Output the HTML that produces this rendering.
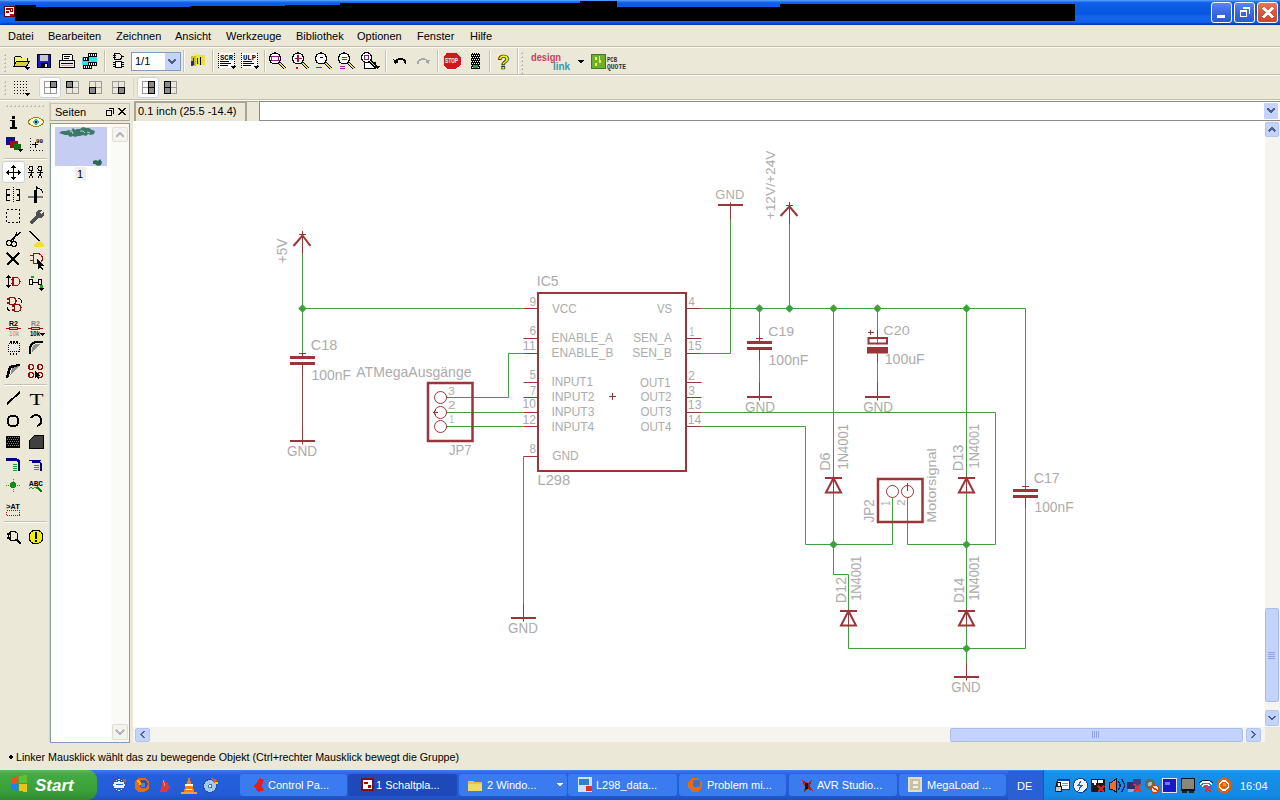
<!DOCTYPE html>
<html><head><meta charset="utf-8">
<style>

*{margin:0;padding:0;box-sizing:border-box}
html,body{width:1280px;height:800px;overflow:hidden;background:#ebe8d7;font-family:"Liberation Sans",sans-serif;font-size:11px;color:#000}
.abs{position:absolute}
.t{position:absolute;white-space:nowrap;line-height:1}

</style></head>
<body>
<div class="abs" style="left:0;top:0;width:1280px;height:25px;background:linear-gradient(#60a8ff 0px,#2a78f8 1.5px,#0c5ee8 3px,#0856e0 14px,#1464ec 16px,#1262ea 22px,#0a48c8 23.5px,#0038a8 25px)"></div><div class="abs" style="left:15px;top:6.5px;width:175px;height:14.2px;background:#000"></div><div class="abs" style="left:15px;top:5px;width:21px;height:15.7px;background:#000"></div><div class="abs" style="left:190px;top:5.5px;width:95px;height:15.2px;background:#000"></div><div class="abs" style="left:285px;top:4.7px;width:55px;height:16.0px;background:#000"></div><div class="abs" style="left:340px;top:3.3px;width:240px;height:17.4px;background:#000"></div><div class="abs" style="left:580px;top:0.5px;width:37px;height:20.2px;background:#000"></div><div class="abs" style="left:617px;top:7px;width:163px;height:13.7px;background:#000"></div><div class="abs" style="left:780px;top:4px;width:295px;height:16.7px;background:#000"></div><div class="abs" style="left:4px;top:6px;width:11px;height:11px;background:#fff;border:1px solid #600"></div><div class="abs" style="left:6px;top:8px;width:4px;height:2px;background:#900"></div><div class="abs" style="left:6px;top:11px;width:3px;height:2px;background:#900"></div><div class="abs" style="left:10px;top:8px;width:3px;height:4px;border:1px solid #900"></div><div class="abs" style="left:10px;top:14px;width:4px;height:2px;background:#c00"></div><div class="abs" style="left:1211px;top:2px;width:21px;height:21px;border:1px solid #fff;border-radius:3px;background:linear-gradient(#5a86f0,#3a68e0 50%,#2e58d0)"></div><div class="abs" style="left:1234px;top:2px;width:21px;height:21px;border:1px solid #fff;border-radius:3px;background:linear-gradient(#5a86f0,#3a68e0 50%,#2e58d0)"></div><div class="abs" style="left:1257px;top:2px;width:21px;height:21px;border:1px solid #fff;border-radius:3px;background:linear-gradient(#e87858,#d85a38 50%,#c84a28)"></div><div class="abs" style="left:1217px;top:15px;width:8px;height:3px;background:#fff"></div><div class="abs" style="left:1240px;top:10px;width:7px;height:7px;border:1px solid #fff;border-top-width:2px"></div><div class="abs" style="left:1243px;top:7px;width:7px;height:7px;border:1px solid #fff;border-top-width:2px;border-left:none;border-bottom:none"></div><div class="abs" style="left:0;top:46px;width:1280px;height:1px;background:#c2bfae"></div><div class="abs" style="left:0;top:47px;width:1280px;height:1px;background:#fbfaf4"></div><div class="t" style="left:8px;top:31px">Datei</div><div class="t" style="left:48px;top:31px">Bearbeiten</div><div class="t" style="left:116px;top:31px">Zeichnen</div><div class="t" style="left:175px;top:31px">Ansicht</div><div class="t" style="left:226px;top:31px">Werkzeuge</div><div class="t" style="left:296px;top:31px">Bibliothek</div><div class="t" style="left:357px;top:31px">Optionen</div><div class="t" style="left:417px;top:31px">Fenster</div><div class="t" style="left:470px;top:31px">Hilfe</div><div class="abs" style="left:0;top:74px;width:1280px;height:1px;background:#c2bfae"></div><div class="abs" style="left:0;top:75px;width:1280px;height:1px;background:#fbfaf4"></div><div class="abs" style="left:0;top:99px;width:1280px;height:1px;background:#c2bfae"></div><div class="abs" style="left:0;top:100px;width:1280px;height:1px;background:#fbfaf4"></div><div class="abs" style="left:131px;top:52px;width:50px;height:19px;background:#fff;border:1px solid #7f9db9"></div><div class="abs" style="left:165px;top:53px;width:15px;height:17px;background:#c3d3fd;border-radius:1px"></div><div class="t" style="left:135px;top:56px">1/1</div><div class="abs" style="left:39px;top:77px;width:22px;height:21px;background:#fcfcf9;border:1px solid #c9d2dc;border-radius:3px"></div><div class="abs" style="left:137px;top:77px;width:22px;height:21px;background:#fcfcf9;border:1px solid #c9d2dc;border-radius:3px"></div><div class="abs" style="left:2px;top:161px;width:23px;height:22px;background:#fcfcf9;border:1px solid #c9d2dc;border-radius:3px"></div><div class="abs" style="left:49px;top:101px;width:1px;height:641px;background:#d8d4c0"></div><div class="abs" style="left:50px;top:103px;width:80px;height:18px;border:1px solid #c5c1ae;border-bottom-color:#a7a491"></div><div class="t" style="left:55px;top:107px">Seiten</div><div class="abs" style="left:50px;top:123px;width:80px;height:620px;background:#fff;border:1px solid #7f9db9"></div><div class="abs" style="left:111px;top:124px;width:18px;height:618px;background:#fafaf7"></div><div class="abs" style="left:112px;top:127px;width:16px;height:15px;background:#f4f3ee;border:1px solid #e0ded4;border-radius:2px"></div><div class="abs" style="left:112px;top:724px;width:16px;height:16px;background:#f4f3ee;border:1px solid #e0ded4;border-radius:2px"></div><div class="abs" style="left:55px;top:127px;width:52px;height:39px;background:#c6cdf2"></div><div class="abs" style="left:75px;top:167px;width:11px;height:13px;background:#f0efe8"></div><div class="t" style="left:77px;top:169px">1</div><div class="abs" style="left:134px;top:101px;width:112px;height:20px;border-top:2px solid #a8a592;border-left:2px solid #a8a592"></div><div class="t" style="left:138px;top:106px">0.1 inch (25.5 -14.4)</div><div class="abs" style="left:245px;top:101px;width:13px;height:20px;border-left:2px solid #a8a592;border-top:1px solid #a8a592"></div><div class="abs" style="left:259px;top:101px;width:1021px;height:20px;background:#fff;border:1px solid #8c8c8c;border-right:none"></div><div class="abs" style="left:1264px;top:103px;width:14px;height:16px;background:#c3d3fd;border-radius:1px"></div><div class="abs" style="left:133px;top:121px;width:1132px;height:606px;background:#fff"></div><div class="abs" style="left:1265px;top:121px;width:15px;height:606px;background:#f5f4ee"></div><div class="abs" style="left:1265px;top:122px;width:14px;height:15px;background:#c3d3fd;border:1px solid #b2c4f0;border-radius:2px"></div><div class="abs" style="left:1265px;top:608px;width:14px;height:94px;background:#c3d3fd;border:1px solid #a9bdec;border-radius:2px"></div><div class="abs" style="left:1265px;top:710px;width:14px;height:16px;background:#c3d3fd;border:1px solid #b2c4f0;border-radius:2px"></div><div class="abs" style="left:133px;top:727px;width:1132px;height:15px;background:#f5f4ee"></div><div class="abs" style="left:135px;top:728px;width:15px;height:14px;background:#c3d3fd;border:1px solid #b2c4f0;border-radius:2px"></div><div class="abs" style="left:950px;top:728px;width:293px;height:14px;background:#c3d3fd;border:1px solid #a9bdec;border-radius:2px"></div><div class="abs" style="left:1246px;top:728px;width:15px;height:14px;background:#c3d3fd;border:1px solid #b2c4f0;border-radius:2px"></div><div class="t" style="left:16px;top:752px;transform:scaleX(0.972);transform-origin:0 0">Linker Mausklick wählt das zu bewegende Objekt (Ctrl+rechter Mausklick bewegt die Gruppe)</div><div class="abs" style="left:0;top:770px;width:1280px;height:30px;background:linear-gradient(#3d7ff0 0px,#2f6fe8 2px,#2460dc 5px,#245cd8 24px,#1e50c0 30px)"></div><div class="abs" style="left:0;top:770px;width:97px;height:30px;border-radius:0 9px 9px 0;background:linear-gradient(#5cbc5c 0px,#44aa44 4px,#3aa23a 20px,#2e8a2e 30px)"></div><div class="t" style="left:35px;top:777px;color:#fff;font-size:17px;font-weight:bold;font-style:italic">Start</div><div class="abs" style="left:240px;top:774px;width:107px;height:22px;border-radius:3px;background:#3a7bf0"></div><div class="t" style="left:268px;top:780px;color:#fff;font-size:11px">Control Pa...</div><div class="abs" style="left:348px;top:774px;width:109px;height:22px;border-radius:3px;background:#1d4ab8"></div><div class="t" style="left:376px;top:780px;color:#fff;font-size:11px">1 Schaltpla...</div><div class="abs" style="left:459px;top:774px;width:108px;height:22px;border-radius:3px;background:#3a7bf0"></div><div class="t" style="left:487px;top:780px;color:#fff;font-size:11px">2 Windo...</div><div class="abs" style="left:568px;top:774px;width:109px;height:22px;border-radius:3px;background:#3a7bf0"></div><div class="t" style="left:596px;top:780px;color:#fff;font-size:11px">L298_data...</div><div class="abs" style="left:679px;top:774px;width:107px;height:22px;border-radius:3px;background:#3a7bf0"></div><div class="t" style="left:707px;top:780px;color:#fff;font-size:11px">Problem mi...</div><div class="abs" style="left:789px;top:774px;width:108px;height:22px;border-radius:3px;background:#3a7bf0"></div><div class="t" style="left:817px;top:780px;color:#fff;font-size:11px">AVR Studio...</div><div class="abs" style="left:899px;top:774px;width:107px;height:22px;border-radius:3px;background:#3a7bf0"></div><div class="t" style="left:927px;top:780px;color:#fff;font-size:11px">MegaLoad ...</div><div class="abs" style="left:1008px;top:771px;width:35px;height:29px;background:#2a5fd6"></div><div class="t" style="left:1017px;top:781px;color:#fff">DE</div><div class="abs" style="left:1043px;top:770px;width:237px;height:30px;background:linear-gradient(#2a9cf0 0px,#1690e8 3px,#138ae6 25px,#1080d8 30px);border-left:1px solid #0a5ab8"></div><div class="t" style="left:1240px;top:781px;color:#fff">16:04</div>
<svg class="abs" style="left:0;top:0" width="1280" height="800"><g shape-rendering="crispEdges"><path d="M1263 7.5l10 10M1273 7.5l-10 10" fill="none" stroke="#fff" stroke-width="2.2"/><rect x="4" y="54" width="2" height="2" fill="#c0bcaa"/><rect x="4" y="54" width="1" height="1" fill="#f8f8f0"/><rect x="4" y="58" width="2" height="2" fill="#c0bcaa"/><rect x="4" y="58" width="1" height="1" fill="#f8f8f0"/><rect x="4" y="62" width="2" height="2" fill="#c0bcaa"/><rect x="4" y="62" width="1" height="1" fill="#f8f8f0"/><rect x="4" y="66" width="2" height="2" fill="#c0bcaa"/><rect x="4" y="66" width="1" height="1" fill="#f8f8f0"/><rect x="4" y="70" width="2" height="2" fill="#c0bcaa"/><rect x="4" y="70" width="1" height="1" fill="#f8f8f0"/><path d="M14.5 56.5h6l1 1.5h6v3" fill="none" stroke="#000" stroke-width="1"/><rect x="14" y="57" width="1" height="10" fill="#000"/><rect x="15" y="58" width="12" height="3" fill="#f4f080"/><path d="M14 66.5h12.5l3-5.5h-13z" fill="#d8d040" stroke="#000" stroke-width="1"/><path d="M25 67h5l-2.5 3z" fill="#000" stroke="none" stroke-width="1"/><rect x="37" y="54" width="14" height="14" fill="#000"/><rect x="38" y="55" width="12" height="12" fill="#1c1cb8"/><rect x="40" y="55" width="8" height="6" fill="#c8c8c8"/><rect x="41" y="63" width="7" height="5" fill="#000"/><rect x="45" y="64" width="2" height="3" fill="#e0e0e0"/><path d="M62.5 54.5h9l1.5 1.5-1 4h-10z" fill="#fff" stroke="#000" stroke-width="1"/><rect x="64" y="56" width="6" height="1" fill="#000"/><rect x="64" y="58" width="5" height="1" fill="#000"/><path d="M59.5 60.5h15v7h-15z" fill="#e8e8e8" stroke="#000" stroke-width="1"/><rect x="61" y="63" width="12" height="1" fill="#000"/><rect x="61" y="65" width="12" height="1" fill="#d8c040"/><rect x="82" y="57" width="15" height="8" fill="#30e0e8"/><rect x="88" y="53" width="9" height="4" fill="#000"/><rect x="89" y="54" width="1" height="2" fill="#fff"/><rect x="91" y="54" width="1" height="2" fill="#fff"/><rect x="93" y="54" width="1" height="2" fill="#fff"/><rect x="95" y="54" width="1" height="2" fill="#fff"/><rect x="83" y="57" width="6" height="4" fill="#000"/><rect x="84" y="58" width="1" height="2" fill="#fff"/><rect x="86" y="58" width="1" height="2" fill="#fff"/><rect x="88" y="62" width="9" height="4" fill="#000"/><rect x="89" y="63" width="1" height="2" fill="#fff"/><rect x="91" y="63" width="1" height="2" fill="#fff"/><rect x="93" y="63" width="1" height="2" fill="#fff"/><rect x="95" y="63" width="1" height="2" fill="#fff"/><rect x="83" y="65" width="9" height="4" fill="#000"/><rect x="84" y="66" width="1" height="2" fill="#fff"/><rect x="86" y="66" width="1" height="2" fill="#fff"/><rect x="88" y="66" width="1" height="2" fill="#fff"/><rect x="90" y="66" width="1" height="2" fill="#fff"/><rect x="104" y="50" width="1" height="22" fill="#c5c2b2"/><rect x="105" y="50" width="1" height="22" fill="#fcfcf8"/><path d="M113 55.5h3M114.5 53.5h4a3 3 0 0 1 0 6h-4z M121.5 56.5h2 M113 57.5h3" fill="none" stroke="#000" stroke-width="1"/><rect x="115" y="61" width="7" height="7" fill="#000"/><rect x="116" y="62" width="5" height="5" fill="#fff"/><rect x="113" y="62" width="2" height="1" fill="#000"/><rect x="122" y="62" width="2" height="1" fill="#000"/><rect x="113" y="64" width="2" height="1" fill="#000"/><rect x="122" y="64" width="2" height="1" fill="#000"/><rect x="113" y="66" width="2" height="1" fill="#000"/><rect x="122" y="66" width="2" height="1" fill="#000"/><path d="M168.5 59.5l3.5 3.5 3.5-3.5" fill="none" stroke="#4d6185" stroke-width="2"/><rect x="183" y="50" width="1" height="22" fill="#c5c2b2"/><rect x="184" y="50" width="1" height="22" fill="#fcfcf8"/><path d="M191 56l4-3h5l-4 3z" fill="#f0f060" stroke="none" stroke-width="1"/><rect x="191" y="56" width="5" height="10" fill="#c8c020"/><rect x="196" y="55" width="9" height="10" fill="#e8e040"/><rect x="193" y="58" width="1" height="7" fill="#202060"/><rect x="197" y="58" width="1" height="6" fill="#202060"/><rect x="200" y="57" width="1" height="8" fill="#000"/><rect x="191" y="61" width="2" height="5" fill="#303080"/><rect x="212" y="50" width="1" height="22" fill="#c5c2b2"/><rect x="213" y="50" width="1" height="22" fill="#fcfcf8"/><rect x="218" y="53" width="17" height="15" fill="#fff"/><rect x="234" y="53" width="1" height="1" fill="#000"/><rect x="218" y="53" width="1" height="1" fill="#000"/><rect x="234" y="55" width="1" height="1" fill="#000"/><rect x="218" y="55" width="1" height="1" fill="#000"/><rect x="234" y="57" width="1" height="1" fill="#000"/><rect x="218" y="57" width="1" height="1" fill="#000"/><rect x="234" y="59" width="1" height="1" fill="#000"/><rect x="218" y="59" width="1" height="1" fill="#000"/><rect x="234" y="61" width="1" height="1" fill="#000"/><rect x="218" y="61" width="1" height="1" fill="#000"/><rect x="234" y="63" width="1" height="1" fill="#000"/><rect x="218" y="63" width="1" height="1" fill="#000"/><rect x="234" y="65" width="1" height="1" fill="#000"/><rect x="218" y="65" width="1" height="1" fill="#000"/><rect x="234" y="67" width="1" height="1" fill="#000"/><rect x="218" y="67" width="1" height="1" fill="#000"/><text x="220" y="59.5" font-family="Liberation Mono" font-weight="bold" font-size="7.5" fill="#000" textLength="13" lengthAdjust="spacingAndGlyphs">SCR</text><rect x="220" y="61" width="9" height="1" fill="#000"/><rect x="220" y="63" width="11" height="1" fill="#000"/><rect x="220" y="65" width="8" height="1" fill="#000"/><path d="M230 66h6l-3 3z" fill="#000" stroke="none" stroke-width="1"/><rect x="241" y="53" width="17" height="15" fill="#fff"/><rect x="257" y="53" width="1" height="1" fill="#000"/><rect x="241" y="53" width="1" height="1" fill="#000"/><rect x="257" y="55" width="1" height="1" fill="#000"/><rect x="241" y="55" width="1" height="1" fill="#000"/><rect x="257" y="57" width="1" height="1" fill="#000"/><rect x="241" y="57" width="1" height="1" fill="#000"/><rect x="257" y="59" width="1" height="1" fill="#000"/><rect x="241" y="59" width="1" height="1" fill="#000"/><rect x="257" y="61" width="1" height="1" fill="#000"/><rect x="241" y="61" width="1" height="1" fill="#000"/><rect x="257" y="63" width="1" height="1" fill="#000"/><rect x="241" y="63" width="1" height="1" fill="#000"/><rect x="257" y="65" width="1" height="1" fill="#000"/><rect x="241" y="65" width="1" height="1" fill="#000"/><rect x="257" y="67" width="1" height="1" fill="#000"/><rect x="241" y="67" width="1" height="1" fill="#000"/><text x="243" y="59.5" font-family="Liberation Mono" font-weight="bold" font-size="7.5" fill="#000" textLength="13" lengthAdjust="spacingAndGlyphs">ULP</text><rect x="243" y="61" width="9" height="1" fill="#000"/><rect x="243" y="63" width="11" height="1" fill="#000"/><rect x="243" y="65" width="8" height="1" fill="#000"/><path d="M253 66h6l-3 3z" fill="#000" stroke="none" stroke-width="1"/><rect x="264" y="50" width="1" height="22" fill="#c5c2b2"/><rect x="265" y="50" width="1" height="22" fill="#fcfcf8"/><circle cx="275" cy="58.5" r="5.5" fill="#fff" stroke="#000" stroke-width="1.2"/><path d="M279 62.5l6 6" fill="none" stroke="#000" stroke-width="3.2"/><path d="M279.3 62.8l5.5 5.5" fill="none" stroke="#e8e040" stroke-width="1.6"/><rect x="271.5" y="56.5" width="7" height="4" fill="none" stroke="#802080" stroke-width="1"/><circle cx="298" cy="58.5" r="5.5" fill="#fff" stroke="#000" stroke-width="1.2"/><path d="M302 62.5l6 6" fill="none" stroke="#000" stroke-width="3.2"/><path d="M302.3 62.8l5.5 5.5" fill="none" stroke="#e8e040" stroke-width="1.6"/><path d="M294.5 58.5h7M298 55v7" fill="none" stroke="#b01040" stroke-width="1.5"/><rect x="296" y="67" width="2" height="2" fill="#c01040"/><circle cx="321" cy="58.5" r="5.5" fill="#fff" stroke="#000" stroke-width="1.2"/><path d="M325 62.5l6 6" fill="none" stroke="#000" stroke-width="3.2"/><path d="M325.3 62.8l5.5 5.5" fill="none" stroke="#e8e040" stroke-width="1.6"/><path d="M319.5 57.5h3" fill="none" stroke="#000" stroke-width="1"/><rect x="316" y="67" width="6" height="1" fill="#b02040"/><circle cx="344" cy="58.5" r="5.5" fill="#fff" stroke="#000" stroke-width="1.2"/><path d="M348 62.5l6 6" fill="none" stroke="#000" stroke-width="3.2"/><path d="M348.3 62.8l5.5 5.5" fill="none" stroke="#e8e040" stroke-width="1.6"/><path d="M341.5 57.5h5M341.5 59.5h5" fill="none" stroke="#902090" stroke-width="1"/><rect x="340" y="66" width="5" height="1" fill="#b02090"/><rect x="340" y="68" width="5" height="1" fill="#b02090"/><rect x="364" y="62" width="12" height="6" fill="#fff"/><path d="M364.5 62.5h11v6h-11z" fill="none" stroke="#000" stroke-width="1"/><circle cx="366.5" cy="57.5" r="5" fill="#fff" stroke="#000" stroke-width="1.2"/><rect x="364" y="55" width="5" height="5" fill="#fff"/><path d="M364.5 55.5h4v4h-4z" fill="none" stroke="#802080" stroke-width="1"/><path d="M370 61l6 6" fill="none" stroke="#000" stroke-width="3"/><path d="M370.3 61.3l5.5 5.5" fill="none" stroke="#e8e040" stroke-width="1.4"/><path d="M375 66h5l-2.5 3z" fill="#000" stroke="none" stroke-width="1"/><rect x="385" y="50" width="1" height="22" fill="#c5c2b2"/><rect x="386" y="50" width="1" height="22" fill="#fcfcf8"/><path d="M405.5 63.5c0-5-7-6-10-2" fill="none" stroke="#000" stroke-width="1.8"/><path d="M393 59l2 5 4-2z" fill="#000" stroke="none" stroke-width="1"/><path d="M418 63.5c0-5 7-6 10-2" fill="none" stroke="#a8a8a8" stroke-width="1.8"/><path d="M430.5 59l-2 5-4-2z" fill="#a8a8a8" stroke="none" stroke-width="1"/><rect x="437" y="50" width="1" height="22" fill="#c5c2b2"/><rect x="438" y="50" width="1" height="22" fill="#fcfcf8"/><path d="M447 52h9l5 5v8l-5 4h-9l-4-4v-8z" fill="#d01818" stroke="#fff" stroke-width="0.8"/><text x="445" y="63.3" font-family="Liberation Sans" font-weight="bold" font-size="6.5" fill="#fff" textLength="13" lengthAdjust="spacingAndGlyphs">STOP</text><rect x="471" y="53" width="9" height="16" fill="#000"/><rect x="471" y="53" width="1" height="1" fill="#fff"/><rect x="473" y="53" width="1" height="1" fill="#fff"/><rect x="475" y="53" width="1" height="1" fill="#fff"/><rect x="477" y="53" width="1" height="1" fill="#fff"/><rect x="479" y="53" width="1" height="1" fill="#fff"/><rect x="472" y="55" width="1" height="1" fill="#fff"/><rect x="474" y="55" width="1" height="1" fill="#fff"/><rect x="476" y="55" width="1" height="1" fill="#fff"/><rect x="478" y="55" width="1" height="1" fill="#fff"/><rect x="471" y="57" width="1" height="1" fill="#fff"/><rect x="473" y="57" width="1" height="1" fill="#fff"/><rect x="475" y="57" width="1" height="1" fill="#fff"/><rect x="477" y="57" width="1" height="1" fill="#fff"/><rect x="479" y="57" width="1" height="1" fill="#fff"/><rect x="472" y="59" width="1" height="1" fill="#fff"/><rect x="474" y="59" width="1" height="1" fill="#fff"/><rect x="476" y="59" width="1" height="1" fill="#fff"/><rect x="478" y="59" width="1" height="1" fill="#fff"/><rect x="471" y="61" width="1" height="1" fill="#fff"/><rect x="473" y="61" width="1" height="1" fill="#fff"/><rect x="475" y="61" width="1" height="1" fill="#fff"/><rect x="477" y="61" width="1" height="1" fill="#fff"/><rect x="479" y="61" width="1" height="1" fill="#fff"/><rect x="472" y="63" width="1" height="1" fill="#fff"/><rect x="474" y="63" width="1" height="1" fill="#fff"/><rect x="476" y="63" width="1" height="1" fill="#fff"/><rect x="478" y="63" width="1" height="1" fill="#fff"/><rect x="471" y="65" width="1" height="1" fill="#fff"/><rect x="473" y="65" width="1" height="1" fill="#fff"/><rect x="475" y="65" width="1" height="1" fill="#fff"/><rect x="477" y="65" width="1" height="1" fill="#fff"/><rect x="479" y="65" width="1" height="1" fill="#fff"/><rect x="472" y="67" width="1" height="1" fill="#fff"/><rect x="474" y="67" width="1" height="1" fill="#fff"/><rect x="476" y="67" width="1" height="1" fill="#fff"/><rect x="478" y="67" width="1" height="1" fill="#fff"/><rect x="473" y="65" width="5" height="3" fill="#30a030"/><rect x="489" y="50" width="1" height="22" fill="#c5c2b2"/><rect x="490" y="50" width="1" height="22" fill="#fcfcf8"/><text x="497.5" y="69" font-family="Liberation Sans" font-weight="bold" font-size="20" fill="#ffff00" stroke="#000" stroke-width="0.7" textLength="12" lengthAdjust="spacingAndGlyphs">?</text><rect x="517" y="48" width="1" height="26" fill="#c5c2b2"/><rect x="518" y="48" width="1" height="26" fill="#fcfcf8"/><rect x="521" y="52" width="2" height="2" fill="#c0bcaa"/><rect x="521" y="52" width="1" height="1" fill="#f8f8f0"/><rect x="521" y="56" width="2" height="2" fill="#c0bcaa"/><rect x="521" y="56" width="1" height="1" fill="#f8f8f0"/><rect x="521" y="60" width="2" height="2" fill="#c0bcaa"/><rect x="521" y="60" width="1" height="1" fill="#f8f8f0"/><rect x="521" y="64" width="2" height="2" fill="#c0bcaa"/><rect x="521" y="64" width="1" height="1" fill="#f8f8f0"/><rect x="521" y="68" width="2" height="2" fill="#c0bcaa"/><rect x="521" y="68" width="1" height="1" fill="#f8f8f0"/><rect x="521" y="72" width="2" height="2" fill="#c0bcaa"/><rect x="521" y="72" width="1" height="1" fill="#f8f8f0"/><text x="531" y="61" font-family="Liberation Sans" font-weight="bold" font-size="11.5" fill="#c84262" textLength="30" lengthAdjust="spacingAndGlyphs">design</text><text x="553" y="69.5" font-family="Liberation Sans" font-weight="bold" font-size="10" fill="#3a98b0" textLength="17" lengthAdjust="spacingAndGlyphs">link</text><path d="M578 60h6l-3 3.5z" fill="#000" stroke="none" stroke-width="1"/><rect x="591" y="54" width="15" height="15" fill="#3c7a28"/><rect x="592" y="55" width="13" height="13" fill="#6cb030"/><rect x="595" y="57" width="2" height="3" fill="#f0f040"/><rect x="599" y="60" width="2" height="3" fill="#f0f040"/><rect x="595" y="63" width="2" height="3" fill="#f0f040"/><rect x="599" y="56" width="1" height="4" fill="#f0f040"/><text x="607" y="61.5" font-family="Liberation Mono" font-weight="bold" font-size="7" fill="#303030" textLength="10" lengthAdjust="spacingAndGlyphs">PCB</text><text x="607" y="69" font-family="Liberation Mono" font-weight="bold" font-size="7" fill="#303030" textLength="19" lengthAdjust="spacingAndGlyphs">QUOTE</text><rect x="4" y="81" width="2" height="2" fill="#c0bcaa"/><rect x="4" y="81" width="1" height="1" fill="#f8f8f0"/><rect x="4" y="85" width="2" height="2" fill="#c0bcaa"/><rect x="4" y="85" width="1" height="1" fill="#f8f8f0"/><rect x="4" y="89" width="2" height="2" fill="#c0bcaa"/><rect x="4" y="89" width="1" height="1" fill="#f8f8f0"/><rect x="4" y="93" width="2" height="2" fill="#c0bcaa"/><rect x="4" y="93" width="1" height="1" fill="#f8f8f0"/><rect x="14" y="81" width="1" height="1" fill="#000"/><rect x="17" y="81" width="1" height="1" fill="#000"/><rect x="20" y="81" width="1" height="1" fill="#000"/><rect x="23" y="81" width="1" height="1" fill="#000"/><rect x="26" y="81" width="1" height="1" fill="#000"/><rect x="14" y="84" width="1" height="1" fill="#000"/><rect x="17" y="84" width="1" height="1" fill="#000"/><rect x="20" y="84" width="1" height="1" fill="#000"/><rect x="23" y="84" width="1" height="1" fill="#000"/><rect x="26" y="84" width="1" height="1" fill="#000"/><rect x="14" y="87" width="1" height="1" fill="#000"/><rect x="17" y="87" width="1" height="1" fill="#000"/><rect x="20" y="87" width="1" height="1" fill="#000"/><rect x="23" y="87" width="1" height="1" fill="#000"/><rect x="26" y="87" width="1" height="1" fill="#000"/><rect x="14" y="90" width="1" height="1" fill="#000"/><rect x="17" y="90" width="1" height="1" fill="#000"/><rect x="20" y="90" width="1" height="1" fill="#000"/><rect x="23" y="90" width="1" height="1" fill="#000"/><rect x="26" y="90" width="1" height="1" fill="#000"/><rect x="14" y="93" width="1" height="1" fill="#000"/><rect x="17" y="93" width="1" height="1" fill="#000"/><rect x="20" y="93" width="1" height="1" fill="#000"/><rect x="23" y="93" width="1" height="1" fill="#000"/><rect x="26" y="93" width="1" height="1" fill="#000"/><path d="M24 93h6l-3 3z" fill="#000" stroke="none" stroke-width="1"/><path d="M44.5 81.5h12v12h-12zM50.5 81v13M44 87.5h13" fill="none" stroke="#9a9a9a" stroke-width="1"/><rect x="50" y="81" width="7" height="7" fill="#000"/><rect x="51" y="82" width="5" height="5" fill="#8a8a8a"/><path d="M66.5 81.5h12v12h-12zM72.5 81v13M66 87.5h13" fill="none" stroke="#9a9a9a" stroke-width="1"/><rect x="66" y="81" width="7" height="7" fill="#000"/><rect x="67" y="82" width="5" height="5" fill="#8a8a8a"/><path d="M89.5 81.5h12v12h-12zM95.5 81v13M89 87.5h13" fill="none" stroke="#9a9a9a" stroke-width="1"/><rect x="89" y="87" width="7" height="7" fill="#000"/><rect x="90" y="88" width="5" height="5" fill="#8a8a8a"/><path d="M112.5 81.5h12v12h-12zM118.5 81v13M112 87.5h13" fill="none" stroke="#9a9a9a" stroke-width="1"/><rect x="118" y="87" width="7" height="7" fill="#000"/><rect x="119" y="88" width="5" height="5" fill="#8a8a8a"/><rect x="133" y="78" width="1" height="19" fill="#d8d5c5"/><path d="M142.5 81.5h12v12h-12zM148.5 81v13M142 87.5h13" fill="none" stroke="#9a9a9a" stroke-width="1"/><rect x="148" y="81" width="7" height="13" fill="#000"/><rect x="149" y="82" width="5" height="5" fill="#8a8a8a"/><rect x="149" y="88" width="5" height="5" fill="#8a8a8a"/><path d="M164.5 81.5h12v12h-12zM170.5 81v13M164 87.5h13" fill="none" stroke="#9a9a9a" stroke-width="1"/><rect x="164" y="81" width="7" height="13" fill="#000"/><rect x="165" y="82" width="5" height="5" fill="#8a8a8a"/><rect x="165" y="88" width="5" height="5" fill="#8a8a8a"/><rect x="6" y="105" width="2" height="2" fill="#c0bcaa"/><rect x="6" y="105" width="1" height="1" fill="#f8f8f0"/><rect x="10" y="105" width="2" height="2" fill="#c0bcaa"/><rect x="10" y="105" width="1" height="1" fill="#f8f8f0"/><rect x="14" y="105" width="2" height="2" fill="#c0bcaa"/><rect x="14" y="105" width="1" height="1" fill="#f8f8f0"/><rect x="18" y="105" width="2" height="2" fill="#c0bcaa"/><rect x="18" y="105" width="1" height="1" fill="#f8f8f0"/><rect x="22" y="105" width="2" height="2" fill="#c0bcaa"/><rect x="22" y="105" width="1" height="1" fill="#f8f8f0"/><rect x="26" y="105" width="2" height="2" fill="#c0bcaa"/><rect x="26" y="105" width="1" height="1" fill="#f8f8f0"/><rect x="30" y="105" width="2" height="2" fill="#c0bcaa"/><rect x="30" y="105" width="1" height="1" fill="#f8f8f0"/><rect x="34" y="105" width="2" height="2" fill="#c0bcaa"/><rect x="34" y="105" width="1" height="1" fill="#f8f8f0"/><rect x="38" y="105" width="2" height="2" fill="#c0bcaa"/><rect x="38" y="105" width="1" height="1" fill="#f8f8f0"/><rect x="42" y="105" width="2" height="2" fill="#c0bcaa"/><rect x="42" y="105" width="1" height="1" fill="#f8f8f0"/><rect x="12" y="116" width="3" height="3" fill="#000"/><rect x="10" y="120" width="5" height="1" fill="#000"/><rect x="12" y="120" width="3" height="8" fill="#000"/><rect x="10" y="127" width="7" height="2" fill="#000"/><path d="M28 122c4-6 12-6 16 0c-4 6-12 6-16 0z" fill="#fff8c0" stroke="#a08020" stroke-width="1.2"/><circle cx="36" cy="122" r="2.6" fill="#30c0e0"/><rect x="35" y="121" width="2" height="2" fill="#000"/><rect x="6" y="137" width="9" height="8" fill="#101090"/><rect x="10" y="141" width="8" height="7" fill="#a01010"/><rect x="14" y="144" width="7" height="6" fill="#107010"/><path d="M17 149h6l-3 3z" fill="#000" stroke="none" stroke-width="1"/><rect x="30" y="138" width="1" height="1" fill="#000"/><rect x="30" y="141" width="1" height="1" fill="#000"/><rect x="30" y="144" width="1" height="1" fill="#000"/><rect x="30" y="147" width="1" height="1" fill="#000"/><rect x="30" y="150" width="1" height="1" fill="#000"/><rect x="30" y="150" width="1" height="1" fill="#000"/><rect x="33" y="150" width="1" height="1" fill="#000"/><rect x="36" y="150" width="1" height="1" fill="#000"/><rect x="39" y="150" width="1" height="1" fill="#000"/><rect x="42" y="150" width="1" height="1" fill="#000"/><path d="M32 144.5h6M35 141.5v6" fill="none" stroke="#000" stroke-width="1"/><text x="36" y="143" font-family="Liberation Mono" font-weight="bold" font-size="6" fill="#000">90</text><rect x="4" y="158" width="43" height="1" fill="#c5c2b2"/><rect x="4" y="159" width="43" height="1" fill="#fcfcf8"/><path d="M13.5 165v15M6 172.5h15" fill="none" stroke="#000" stroke-width="1.5"/><path d="M13.5 165l-3 3h6z M13.5 180l-3-3h6z M6 172.5l3-3v6z M21 172.5l-3-3v6z" fill="#000" stroke="none" stroke-width="1"/><circle cx="31" cy="168.5" r="2" fill="none" stroke="#000"/><path d="M31 170.5v4M28 172.5h6M28.5 178.5l2.5-4 2.5 4" fill="none" stroke="#000" stroke-width="1"/><circle cx="40" cy="168.5" r="2" fill="none" stroke="#000"/><path d="M40 170.5v4M37 172.5h6M37.5 178.5l2.5-4 2.5 4" fill="none" stroke="#000" stroke-width="1"/><path d="M10 189.5h-3.5v11h3.5M6.5 195h3M16 189.5h3.5v11h-3.5M19.5 195h-3" fill="none" stroke="#000" stroke-width="1.3"/><rect x="13" y="187" width="1" height="1" fill="#000"/><rect x="13" y="189" width="1" height="1" fill="#000"/><rect x="13" y="191" width="1" height="1" fill="#000"/><rect x="13" y="193" width="1" height="1" fill="#000"/><rect x="13" y="195" width="1" height="1" fill="#000"/><rect x="13" y="197" width="1" height="1" fill="#000"/><rect x="13" y="199" width="1" height="1" fill="#000"/><rect x="13" y="201" width="1" height="1" fill="#000"/><rect x="34" y="190" width="3" height="13" fill="#000"/><rect x="28" y="196" width="15" height="2" fill="#808080"/><rect x="34" y="190" width="3" height="13" fill="#000"/><path d="M37 188c3 0 5 2 6 5" fill="none" stroke="#000" stroke-width="1"/><path d="M36 186l3 2-3 2z" fill="#000" stroke="none" stroke-width="1"/><path d="M6.5 209.5h13v13h-13z" fill="none" stroke="#000" stroke-width="1" stroke-dasharray="2 2"/><path d="M30.5 223.5l8-8" fill="none" stroke="#505050" stroke-width="3.2"/><circle cx="40" cy="214" r="4.2" fill="#505050"/><path d="M40.5 213.5l4-4" fill="none" stroke="#ebe8d7" stroke-width="2.6"/><circle cx="9" cy="243" r="2.5" fill="none" stroke="#000" stroke-width="1.2"/><circle cx="14" cy="244" r="2.5" fill="none" stroke="#000" stroke-width="1.2"/><path d="M10 241l11-9M13 241l4-9" fill="none" stroke="#000" stroke-width="1.2"/><path d="M30 231l9 10" fill="none" stroke="#000" stroke-width="1.5"/><path d="M34 244l6-3 4 3v3h-10z" fill="#f0e030" stroke="none" stroke-width="1"/><path d="M7 253l12 12M19 253l-12 12" fill="none" stroke="#000" stroke-width="2"/><path d="M30 255.5h3M30 260.5h3M33.5 253.5h4a5 5 0 0 1 0 10h-4z" fill="none" stroke="#901010" stroke-width="1.2"/><path d="M37 259l7 7-3 0 2 3-1 1-2-3-2 2z" fill="#000" stroke="none" stroke-width="1"/><path d="M8.5 276v11" fill="none" stroke="#000" stroke-width="1"/><path d="M8.5 275l-2.5 3h5zM8.5 288l-2.5-3h5z" fill="#000" stroke="none" stroke-width="1"/><path d="M13 277.5h3a4 4 0 0 1 0 8h-3zM11 279.5h2M11 283.5h2" fill="none" stroke="#901010" stroke-width="1.2"/><rect x="29" y="279" width="4" height="6" fill="#fff"/><path d="M29.5 279.5h3v5h-3zM38.5 279.5h3v5h-3z" fill="none" stroke="#000" stroke-width="1"/><path d="M33 282h5" fill="none" stroke="#000" stroke-width="1"/><rect x="31" y="276" width="3" height="2" fill="#20a020"/><rect x="40" y="285" width="3" height="3" fill="#20a020"/><path d="M38 288h6l-3 3z" fill="#000" stroke="none" stroke-width="1"/><path d="M9.5 297.5h3a3.5 3.5 0 0 1 0 7h-3zM7 299h2M7 303h2" fill="none" stroke="#901010" stroke-width="1.2"/><path d="M14.5 304.5h3a3.5 3.5 0 0 1 0 7h-3zM12 306h2M12 310h2" fill="none" stroke="#901010" stroke-width="1.2"/><path d="M18 298c3 1 4 3 4 5M7 307c0 2 1 3 3 4" fill="none" stroke="#000" stroke-width="1"/><text x="9" y="326" font-family="Liberation Sans" font-weight="bold" font-size="7.5" fill="#000" textLength="9" lengthAdjust="spacingAndGlyphs">R2</text><rect x="6" y="328" width="15" height="1" fill="#a01010"/><rect x="9" y="327" width="9" height="3" fill="#e8c0c0"/><path d="M9.5 327.5h8v2h-8z" fill="none" stroke="#a01010" stroke-width="1"/><text x="31" y="326" font-family="Liberation Sans" font-weight="bold" font-size="7.5" fill="#808080" textLength="9" lengthAdjust="spacingAndGlyphs">R2</text><rect x="28" y="328" width="15" height="1" fill="#a01010"/><rect x="31" y="327" width="9" height="3" fill="#e8c0c0"/><path d="M31.5 327.5h8v2h-8z" fill="none" stroke="#a01010" stroke-width="1"/><text x="9" y="336" font-family="Liberation Sans" font-size="7" fill="#909090" textLength="10" lengthAdjust="spacingAndGlyphs">10k</text><text x="30" y="336" font-family="Liberation Sans" font-weight="bold" font-size="7" fill="#000" textLength="10" lengthAdjust="spacingAndGlyphs">10k</text><path d="M40 333h5l-2.5 3z" fill="#000" stroke="none" stroke-width="1"/><path d="M8.5 343.5h11v8h-11z" fill="none" stroke="#000" stroke-width="1" stroke-dasharray="1 1"/><rect x="10" y="345" width="8" height="5" fill="#e8e8e8"/><rect x="10" y="341" width="2" height="2" fill="#000"/><rect x="10" y="353" width="1" height="2" fill="#000"/><rect x="13" y="341" width="2" height="2" fill="#000"/><rect x="13" y="353" width="1" height="2" fill="#000"/><rect x="16" y="341" width="2" height="2" fill="#000"/><rect x="16" y="353" width="1" height="2" fill="#000"/><path d="M30 354v-6a7 7 0 0 1 7-6h6" fill="none" stroke="#000" stroke-width="2.5"/><path d="M32 352v-4a5 5 0 0 1 5-4h4z" fill="#909090" stroke="none" stroke-width="1"/><path d="M7 378l3-11 10-2" fill="none" stroke="#000" stroke-width="2.5"/><path d="M10 376l2-8 7-2z" fill="#909090" stroke="none" stroke-width="1"/><path d="M29.5 364.5h1.5a2.5 2.5 0 0 1 0 5h-1.5z M27.5 366h2M27.5 368h2" fill="none" stroke="#901010" stroke-width="1.1"/><path d="M38.5 364.5h1.5a2.5 2.5 0 0 1 0 5h-1.5z M36.5 366h2M36.5 368h2" fill="none" stroke="#901010" stroke-width="1.1"/><path d="M29.5 372.5h1.5a2.5 2.5 0 0 1 0 5h-1.5z M27.5 374h2M27.5 376h2" fill="none" stroke="#901010" stroke-width="1.1"/><path d="M38.5 372.5h1.5a2.5 2.5 0 0 1 0 5h-1.5z M36.5 374h2M36.5 376h2" fill="none" stroke="#901010" stroke-width="1.1"/><path d="M35 371l5 5-2 0 1 2-1 1-1-2-2 1z" fill="#000" stroke="none" stroke-width="1"/><rect x="4" y="384" width="43" height="1" fill="#c5c2b2"/><rect x="4" y="385" width="43" height="1" fill="#fcfcf8"/><path d="M7 404l13-12" fill="none" stroke="#000" stroke-width="2"/><text x="29.5" y="404.5" font-family="Liberation Serif" font-size="17" fill="#000" textLength="14" lengthAdjust="spacingAndGlyphs">T</text><circle cx="13" cy="421" r="5.5" fill="none" stroke="#000" stroke-width="2"/><path d="M31 418a5.5 5.5 0 1 1 6 8" fill="none" stroke="#000" stroke-width="2"/><rect x="6" y="436" width="14" height="12" fill="#000"/><rect x="8" y="437" width="1" height="1" fill="#808080"/><rect x="10" y="437" width="1" height="1" fill="#808080"/><rect x="12" y="437" width="1" height="1" fill="#808080"/><rect x="14" y="437" width="1" height="1" fill="#808080"/><rect x="16" y="437" width="1" height="1" fill="#808080"/><rect x="18" y="437" width="1" height="1" fill="#808080"/><rect x="7" y="439" width="1" height="1" fill="#808080"/><rect x="9" y="439" width="1" height="1" fill="#808080"/><rect x="11" y="439" width="1" height="1" fill="#808080"/><rect x="13" y="439" width="1" height="1" fill="#808080"/><rect x="15" y="439" width="1" height="1" fill="#808080"/><rect x="17" y="439" width="1" height="1" fill="#808080"/><rect x="8" y="441" width="1" height="1" fill="#808080"/><rect x="10" y="441" width="1" height="1" fill="#808080"/><rect x="12" y="441" width="1" height="1" fill="#808080"/><rect x="14" y="441" width="1" height="1" fill="#808080"/><rect x="16" y="441" width="1" height="1" fill="#808080"/><rect x="18" y="441" width="1" height="1" fill="#808080"/><rect x="7" y="443" width="1" height="1" fill="#808080"/><rect x="9" y="443" width="1" height="1" fill="#808080"/><rect x="11" y="443" width="1" height="1" fill="#808080"/><rect x="13" y="443" width="1" height="1" fill="#808080"/><rect x="15" y="443" width="1" height="1" fill="#808080"/><rect x="17" y="443" width="1" height="1" fill="#808080"/><rect x="8" y="445" width="1" height="1" fill="#808080"/><rect x="10" y="445" width="1" height="1" fill="#808080"/><rect x="12" y="445" width="1" height="1" fill="#808080"/><rect x="14" y="445" width="1" height="1" fill="#808080"/><rect x="16" y="445" width="1" height="1" fill="#808080"/><rect x="18" y="445" width="1" height="1" fill="#808080"/><path d="M29 448v-7l6-6h8v13z" fill="#404040" stroke="#000" stroke-width="1"/><path d="M6 459.5h10a3 3 0 0 1 3 3v8" fill="none" stroke="#000080" stroke-width="2.5"/><rect x="13" y="464" width="4" height="1" fill="#20a020"/><rect x="13" y="466" width="4" height="1" fill="#20a020"/><rect x="13" y="468" width="4" height="1" fill="#20a020"/><rect x="13" y="470" width="4" height="1" fill="#20a020"/><path d="M29 461l3-1 3 1 3-1 3 1" fill="none" stroke="#000080" stroke-width="1"/><path d="M32 462h7a2 2 0 0 1 2 2v7" fill="none" stroke="#000080" stroke-width="1.5"/><rect x="34" y="465" width="5" height="1" fill="#20a020"/><rect x="34" y="467" width="5" height="1" fill="#20a020"/><rect x="34" y="469" width="5" height="1" fill="#20a020"/><circle cx="13" cy="485" r="3" fill="#109010"/><rect x="6" y="485" width="1" height="1" fill="#20a020"/><rect x="8" y="485" width="1" height="1" fill="#20a020"/><rect x="17" y="485" width="1" height="1" fill="#20a020"/><rect x="19" y="485" width="1" height="1" fill="#20a020"/><rect x="13" y="479" width="1" height="1" fill="#20a020"/><rect x="13" y="481" width="1" height="1" fill="#20a020"/><rect x="13" y="489" width="1" height="1" fill="#20a020"/><rect x="13" y="491" width="1" height="1" fill="#20a020"/><text x="29" y="486" font-family="Liberation Mono" font-weight="bold" font-size="7.5" fill="#000" textLength="14" lengthAdjust="spacingAndGlyphs">ABC</text><path d="M29 488.5l2-1 2 1 2-1 2 1" fill="none" stroke="#20a020" stroke-width="1"/><path d="M37 487l5 5" fill="none" stroke="#008000" stroke-width="1.5"/><text x="6" y="509" font-family="Liberation Mono" font-weight="bold" font-size="7.5" fill="#000" textLength="14" lengthAdjust="spacingAndGlyphs">&gt;AT</text><path d="M6.5 510.5h13v5h-13z" fill="none" stroke="#a01010" stroke-width="1" stroke-dasharray="1 1"/><rect x="4" y="521" width="43" height="1" fill="#c5c2b2"/><rect x="4" y="522" width="43" height="1" fill="#fcfcf8"/><path d="M10.5 531.5h3a4.5 4.5 0 0 1 0 9h-3zM7 534h3M7 538h3" fill="none" stroke="#000" stroke-width="1.2"/><circle cx="13" cy="536" r="5" fill="none" stroke="#000" stroke-width="1"/><path d="M17 540l4 4" fill="none" stroke="#000" stroke-width="2"/><circle cx="36" cy="537" r="7" fill="#f0f000" stroke="#000" stroke-width="1"/><rect x="35" y="532" width="2" height="7" fill="#000"/><rect x="35" y="540" width="2" height="2" fill="#000"/><path d="M106.5 110.5h5v5h-5zM108.5 108.5h5v5" fill="none" stroke="#000" stroke-width="1.2"/><path d="M119 108l6 7M125 108l-6 7" fill="none" stroke="#000" stroke-width="1.5"/><path d="M116 137l4-4 4 4" fill="none" stroke="#b8b8b8" stroke-width="1.5"/><path d="M116 730l4 4 4-4" fill="none" stroke="#b8b8b8" stroke-width="1.5"/></g><path d="M59 133l3-2 4 0 3-1 2 1 2-3 2 2 2-1 3 0 3-2 3 1 3 0 3 2 3 1-1 3-3 1-3-1-2 2-3-1-3 1-2 0-3 1-2-1-3 1-2-2-3 0z" fill="#3c7866" stroke="none" stroke-width="1"/><path d="M70 132l2-1 1 3M80 131l3 0 2 2M87 132l3 1" fill="none" stroke="#a0d8c0" stroke-width="1"/><path d="M93 161l3-1 2 1 2-2 2 3-1 3-3 1-3-2-2 0z" fill="#2c6a56" stroke="none" stroke-width="1"/><g shape-rendering="crispEdges"><path d="M1267.5 108.5l3.5 3.5 3.5-3.5" fill="none" stroke="#4d6185" stroke-width="2"/><path d="M1268.5 131.5l3.5-3.5 3.5 3.5" fill="none" stroke="#4d6185" stroke-width="2"/><path d="M1268.5 716l3.5 3.5 3.5-3.5" fill="none" stroke="#4d6185" stroke-width="2"/><path d="M144.5 731l-3.5 3.5 3.5 3.5" fill="none" stroke="#4d6185" stroke-width="2"/><path d="M1251.5 731l3.5 3.5-3.5 3.5" fill="none" stroke="#4d6185" stroke-width="2"/><rect x="1268" y="652" width="7" height="1" fill="#8ea4e0"/><rect x="1268" y="654" width="7" height="1" fill="#8ea4e0"/><rect x="1268" y="656" width="7" height="1" fill="#8ea4e0"/><rect x="1268" y="658" width="7" height="1" fill="#8ea4e0"/><rect x="1092" y="731" width="1" height="7" fill="#8ea4e0"/><rect x="1094" y="731" width="1" height="7" fill="#8ea4e0"/><rect x="1096" y="731" width="1" height="7" fill="#8ea4e0"/><rect x="1098" y="731" width="1" height="7" fill="#8ea4e0"/><path d="M9 757l2-3 2 3-2 3z" fill="#000" stroke="none" stroke-width="1"/><path d="M11 777l7-1v7h-7z" fill="#f05020" stroke="none" stroke-width="1"/><path d="M19 776l8-1v8h-8z" fill="#60c030" stroke="none" stroke-width="1"/><path d="M11 784h7v7l-7-1z" fill="#2080f0" stroke="none" stroke-width="1"/><path d="M19 784h8v8l-8-1z" fill="#f0c020" stroke="none" stroke-width="1"/><circle cx="119" cy="785" r="6.5" fill="#e8f0ff" stroke="#2a5cb8" stroke-width="1.6"/><path d="M115.5 784.5h7M116 782a4 4 0 0 1 6 0M116 788a4 4 0 0 0 6 0" fill="none" stroke="#2060c0" stroke-width="1.5"/><rect x="123" y="779" width="3" height="3" fill="#f04040"/><circle cx="142" cy="785" r="7.5" fill="#e86a10"/><circle cx="143.5" cy="784" r="4.2" fill="#3050a8"/><circle cx="143" cy="785" r="2.5" fill="#5c80d0"/><path d="M137 781c2 0 3 2 3 4" fill="none" stroke="#f0c020" stroke-width="2"/><path d="M160 792l3-12 4 2 3 5-3 5z" fill="#e03838" stroke="none" stroke-width="1"/><path d="M163 780l2 6" fill="none" stroke="#ff9090" stroke-width="1"/><path d="M183 793l6-16 6 16z" fill="#f08010" stroke="none" stroke-width="1"/><rect x="185" y="784" width="8" height="2" fill="#fff"/><rect x="186" y="789" width="6" height="1" fill="#fff"/><rect x="181" y="792" width="16" height="2" fill="#f0a040"/><circle cx="210" cy="786" r="6.5" fill="#a0c8f8" stroke="#2050a0" stroke-width="1.2"/><circle cx="210" cy="786" r="2" fill="#fff" stroke="#2050a0" stroke-width="0.8"/><path d="M211 778l6 2-2 4z" fill="#f05030" stroke="none" stroke-width="1"/><rect x="215" y="782" width="3" height="2" fill="#f0d020"/><path d="M254 786l6-8 4 2-2 6 2 4-6 2z" fill="#e02020" stroke="none" stroke-width="1"/><rect x="361" y="778" width="13" height="13" fill="#801010"/><rect x="363" y="780" width="9" height="9" fill="#fff"/><rect x="364" y="782" width="4" height="2" fill="#a00"/><rect x="368" y="785" width="3" height="3" fill="#a00"/><path d="M468 781h5l1 1h8v9h-14z" fill="#e8c050" stroke="none" stroke-width="1"/><rect x="468" y="784" width="14" height="7" fill="#f0d870"/><rect x="578" y="777" width="14" height="15" fill="#d0e0f0"/><rect x="579" y="779" width="10" height="6" fill="#3080d0"/><rect x="586" y="786" width="6" height="5" fill="#e03020"/><circle cx="695" cy="785" r="7" fill="#e86a10"/><circle cx="696.5" cy="783.5" r="3.8" fill="#4070c0"/><path d="M802 780l6 3 4-3-2 6 3 5-5-2-4 3 1-5z" fill="#c01010" stroke="none" stroke-width="1"/><rect x="805" y="783" width="3" height="6" fill="#000"/><rect x="908" y="777" width="14" height="15" fill="#e0dcc8"/><rect x="910" y="779" width="10" height="11" fill="#c8c0a0"/><rect x="913" y="781" width="5" height="3" fill="#f0f0f0"/><rect x="913" y="786" width="5" height="2" fill="#f0f0f0"/><path d="M556 783h7l-3.5 3.5z" fill="#fff" stroke="none" stroke-width="1"/><rect x="1057" y="779" width="13" height="11" fill="#fff"/><rect x="1057" y="779" width="13" height="2" fill="#2040c0"/><path d="M1057.5 779.5h12v10h-12z" fill="none" stroke="#203060" stroke-width="1"/><rect x="1062" y="783" width="6" height="1" fill="#8090b0"/><rect x="1062" y="785" width="6" height="1" fill="#8090b0"/><rect x="1055" y="786" width="7" height="6" fill="#202020"/><rect x="1056" y="787" width="5" height="4" fill="#c8c8c8"/><path d="M1056.5 786v-2a2 2 0 0 1 4 0v2" fill="none" stroke="#000" stroke-width="1"/><circle cx="1080.5" cy="785.5" r="7" fill="#f0f4ff" stroke="#1a3c90" stroke-width="1"/><path d="M1082 779l-5 7h3l-2 6 5-7h-3z" fill="#2060e0" stroke="none" stroke-width="1"/><rect x="1091" y="779" width="14" height="13" fill="#1a1a1a"/><rect x="1092" y="780" width="5" height="3" fill="#fff"/><rect x="1098" y="780" width="5" height="3" fill="#fff"/><rect x="1094" y="783" width="2" height="2" fill="#fff"/><path d="M1098 786l6 6M1104 786l-6 6" fill="none" stroke="#e02020" stroke-width="2"/><path d="M1109 782h3l4-3v13l-4-3h-3z" fill="#e87030" stroke="#101830" stroke-width="1"/><path d="M1118 781a6 6 0 0 1 0 9M1121 779a8 8 0 0 1 0 13" fill="none" stroke="#102060" stroke-width="1.4"/><rect x="1127" y="782" width="8" height="7" fill="#303060"/><rect x="1133" y="779" width="8" height="7" fill="#404080"/><rect x="1128" y="789" width="6" height="3" fill="#a0a0e0"/><path d="M1134 784l7 8M1141 784l-7 8" fill="none" stroke="#e03030" stroke-width="2"/><circle cx="1150" cy="784" r="5.5" fill="#606860"/><circle cx="1150" cy="784" r="2" fill="#b0c0b0"/><circle cx="1155" cy="789" r="4" fill="#f8e0d0" stroke="#d04010" stroke-width="1.5"/><path d="M1152 787l6 4" fill="none" stroke="#d04010" stroke-width="1.5"/><rect x="1162" y="778" width="15" height="15" fill="#e0e8ff"/><rect x="1163" y="779" width="13" height="13" fill="#1818c8"/><rect x="1165" y="782" width="5" height="3" fill="#6080ff"/><rect x="1181" y="778" width="14" height="13" fill="#101020"/><rect x="1182" y="779" width="12" height="10" fill="#8c8878"/><rect x="1182" y="791" width="5" height="2" fill="#202020"/><rect x="1189" y="791" width="5" height="2" fill="#202020"/><path d="M1200 784a9 9 0 0 1 12 0M1202 786a6 6 0 0 1 8 0" fill="none" stroke="#fff" stroke-width="1.8"/><path d="M1199 783a10 10 0 0 1 14 0" fill="none" stroke="#000" stroke-width="0.8"/><path d="M1205 786l6 6M1211 786l-6 6" fill="none" stroke="#e03040" stroke-width="2"/><circle cx="1224" cy="785.5" r="7.5" fill="#e06010"/><circle cx="1224" cy="785.5" r="4.5" fill="none" stroke="#fff" stroke-width="1.6"/><rect x="1223" y="783" width="3" height="3" fill="#f0a020"/></g></svg>
<svg class="abs" style="left:0;top:0" width="1280" height="800" viewBox="0 0 1280 800">
<g shape-rendering="crispEdges"></g><polyline points="302.5,240.5 302.5,353.5" fill="none" stroke="#3f9f3f" stroke-width="1"/><polyline points="302.5,308.5 523.5,308.5" fill="none" stroke="#3f9f3f" stroke-width="1"/><polyline points="302.5,364.5 302.5,441.5" fill="none" stroke="#3f9f3f" stroke-width="1"/><polyline points="302.5,364.5 302.5,441.5" fill="none" stroke="#9a4a42" stroke-width="1"/><polyline points="523.5,353.5 508.5,353.5 508.5,397.5 446.5,397.5" fill="none" stroke="#3f9f3f" stroke-width="1"/><polyline points="523.5,412.5 446.5,412.5" fill="none" stroke="#3f9f3f" stroke-width="1"/><polyline points="523.5,426.5 446.5,426.5" fill="none" stroke="#3f9f3f" stroke-width="1"/><polyline points="523.5,456.5 523.5,618.5" fill="none" stroke="#3f9f3f" stroke-width="1"/><polyline points="730.5,205.5 730.5,353.5 701.5,353.5" fill="none" stroke="#3f9f3f" stroke-width="1"/><polyline points="701.5,308.5 1025.5,308.5 1025.5,485.5" fill="none" stroke="#3f9f3f" stroke-width="1"/><polyline points="789.5,210.5 789.5,308.5" fill="none" stroke="#3f9f3f" stroke-width="1"/><polyline points="759.5,308.5 759.5,341.5" fill="none" stroke="#3f9f3f" stroke-width="1"/><polyline points="759.5,349.5 759.5,397.5" fill="none" stroke="#3f9f3f" stroke-width="1"/><polyline points="877.5,308.5 877.5,344.5" fill="none" stroke="#3f9f3f" stroke-width="1"/><polyline points="877.5,353.5 877.5,397.5" fill="none" stroke="#3f9f3f" stroke-width="1"/><polyline points="833.5,308.5 833.5,544.5 833.5,574.5 848.5,574.5 848.5,648.5 1025.5,648.5 1025.5,497.5" fill="none" stroke="#3f9f3f" stroke-width="1"/><polyline points="966.5,308.5 966.5,677.5" fill="none" stroke="#3f9f3f" stroke-width="1"/><polyline points="701.5,412.5 995.5,412.5 995.5,544.5 907.5,544.5 907.5,497.5" fill="none" stroke="#3f9f3f" stroke-width="1"/><polyline points="701.5,426.5 805.5,426.5 805.5,544.5 892.5,544.5 892.5,497.5" fill="none" stroke="#3f9f3f" stroke-width="1"/><polyline points="523.5,308.5 538.5,308.5" fill="none" stroke="#9c3539" stroke-width="1"/><polyline points="523.5,338.5 538.5,338.5" fill="none" stroke="#9c3539" stroke-width="1"/><polyline points="523.5,353.5 538.5,353.5" fill="none" stroke="#9c3539" stroke-width="1"/><polyline points="523.5,382.5 538.5,382.5" fill="none" stroke="#9c3539" stroke-width="1"/><polyline points="523.5,397.5 538.5,397.5" fill="none" stroke="#9c3539" stroke-width="1"/><polyline points="523.5,412.5 538.5,412.5" fill="none" stroke="#9c3539" stroke-width="1"/><polyline points="523.5,426.5 538.5,426.5" fill="none" stroke="#9c3539" stroke-width="1"/><polyline points="523.5,456.5 538.5,456.5" fill="none" stroke="#9c3539" stroke-width="1"/><polyline points="686.5,308.5 701.5,308.5" fill="none" stroke="#9c3539" stroke-width="1"/><polyline points="686.5,338.5 701.5,338.5" fill="none" stroke="#9c3539" stroke-width="1"/><polyline points="686.5,353.5 701.5,353.5" fill="none" stroke="#9c3539" stroke-width="1"/><polyline points="686.5,382.5 701.5,382.5" fill="none" stroke="#9c3539" stroke-width="1"/><polyline points="686.5,397.5 701.5,397.5" fill="none" stroke="#9c3539" stroke-width="1"/><polyline points="686.5,412.5 701.5,412.5" fill="none" stroke="#9c3539" stroke-width="1"/><polyline points="686.5,426.5 701.5,426.5" fill="none" stroke="#9c3539" stroke-width="1"/><polyline points="302.5,353.5 302.5,357.5" fill="none" stroke="#9c3539" stroke-width="1"/><polyline points="302.5,364.5 302.5,375.5" fill="none" stroke="#9c3539" stroke-width="1"/><polyline points="302.5,426.5 302.5,444.5" fill="none" stroke="#9c3539" stroke-width="1"/><polyline points="759.5,335.5 759.5,341.5" fill="none" stroke="#9c3539" stroke-width="1"/><polyline points="759.5,349.5 759.5,360.5" fill="none" stroke="#9c3539" stroke-width="1"/><polyline points="759.5,382.5 759.5,400.5" fill="none" stroke="#9c3539" stroke-width="1"/><polyline points="877.5,330.5 877.5,338.5" fill="none" stroke="#9c3539" stroke-width="1"/><polyline points="877.5,353.5 877.5,362.5" fill="none" stroke="#9c3539" stroke-width="1"/><polyline points="877.5,382.5 877.5,400.5" fill="none" stroke="#9c3539" stroke-width="1"/><polyline points="1025.5,485.5 1025.5,491.5" fill="none" stroke="#9c3539" stroke-width="1"/><polyline points="1025.5,496.5 1025.5,508.5" fill="none" stroke="#9c3539" stroke-width="1"/><polyline points="523.5,603.5 523.5,621.5" fill="none" stroke="#9c3539" stroke-width="1"/><polyline points="730.5,202.5 730.5,220.5" fill="none" stroke="#9c3539" stroke-width="1"/><polyline points="966.5,662.5 966.5,680.5" fill="none" stroke="#9c3539" stroke-width="1"/><rect x="538" y="293" width="148" height="178" fill="none" stroke="#9c3539" stroke-width="2"/><line x1="609" y1="396.5" x2="616" y2="396.5" stroke="#9c3539" stroke-width="1"/><line x1="612.5" y1="393" x2="612.5" y2="400" stroke="#9c3539" stroke-width="1"/><polyline points="293.5,246 302.5,235.5 310.5,246" fill="none" stroke="#9c3539" stroke-width="2"/><line x1="302.5" y1="231" x2="302.5" y2="254" stroke="#9c3539" stroke-width="1"/><line x1="299" y1="234.5" x2="306" y2="234.5" stroke="#9c3539" stroke-width="1"/><polyline points="780.5,216 789.5,206.5 797.5,216" fill="none" stroke="#9c3539" stroke-width="2"/><line x1="789.5" y1="202" x2="789.5" y2="224" stroke="#9c3539" stroke-width="1"/><line x1="786" y1="205.5" x2="793" y2="205.5" stroke="#9c3539" stroke-width="1"/><rect x="290" y="440" width="25" height="2" fill="#9c3539"/><rect x="747" y="396" width="25" height="2" fill="#9c3539"/><rect x="865" y="396" width="25" height="2" fill="#9c3539"/><rect x="511" y="617" width="25" height="2" fill="#9c3539"/><rect x="718" y="204" width="25" height="2" fill="#9c3539"/><rect x="954" y="676" width="25" height="2" fill="#9c3539"/><line x1="299" y1="353.5" x2="306" y2="353.5" stroke="#9c3539" stroke-width="1"/><rect x="290" y="356.0" width="25" height="3" fill="#9c3539"/><rect x="290" y="362.0" width="25" height="3" fill="#9c3539"/><line x1="756" y1="338.5" x2="763" y2="338.5" stroke="#9c3539" stroke-width="1"/><rect x="747" y="341.0" width="25" height="3" fill="#9c3539"/><rect x="747" y="347.0" width="25" height="3" fill="#9c3539"/><line x1="1022" y1="486.5" x2="1029" y2="486.5" stroke="#9c3539" stroke-width="1"/><rect x="1013" y="489.0" width="25" height="3" fill="#9c3539"/><rect x="1013" y="495.0" width="25" height="3" fill="#9c3539"/><rect x="868.5" y="338" width="18.5" height="5.5" fill="none" stroke="#9c3539" stroke-width="2"/><rect x="867" y="347" width="21" height="6.5" fill="#9c3539"/><line x1="868" y1="332.5" x2="874" y2="332.5" stroke="#9c3539" stroke-width="1"/><line x1="870.5" y1="330" x2="870.5" y2="335" stroke="#9c3539" stroke-width="1"/><rect x="825" y="477" width="17" height="2" fill="#9c3539"/><polygon points="833.5,478 826,492.5 841,492.5" fill="none" stroke="#9c3539" stroke-width="2"/><line x1="833.5" y1="478" x2="833.5" y2="493" stroke="#9c3539" stroke-width="1"/><rect x="958" y="477" width="17" height="2" fill="#9c3539"/><polygon points="966.5,478 959,492.5 974,492.5" fill="none" stroke="#9c3539" stroke-width="2"/><line x1="966.5" y1="478" x2="966.5" y2="493" stroke="#9c3539" stroke-width="1"/><rect x="840" y="610" width="17" height="2" fill="#9c3539"/><polygon points="848.5,611 841,625.5 856,625.5" fill="none" stroke="#9c3539" stroke-width="2"/><line x1="848.5" y1="611" x2="848.5" y2="626" stroke="#9c3539" stroke-width="1"/><rect x="958" y="610" width="17" height="2" fill="#9c3539"/><polygon points="966.5,611 959,625.5 974,625.5" fill="none" stroke="#9c3539" stroke-width="2"/><line x1="966.5" y1="611" x2="966.5" y2="626" stroke="#9c3539" stroke-width="1"/><rect x="428" y="383" width="44.5" height="58" fill="none" stroke="#9c3539" stroke-width="2.5"/><circle cx="440.5" cy="397.5" r="6" fill="none" stroke="#9c3539" stroke-width="1"/><circle cx="440.5" cy="412.5" r="6" fill="none" stroke="#9c3539" stroke-width="1"/><circle cx="440.5" cy="426.5" r="6" fill="none" stroke="#9c3539" stroke-width="1"/><line x1="433" y1="412.5" x2="438" y2="412.5" stroke="#9c3539" stroke-width="1"/><polyline points="436,410 433.5,412.5 436,415" fill="none" stroke="#9c3539" stroke-width="1"/><rect x="878" y="479" width="44.5" height="43" fill="none" stroke="#9c3539" stroke-width="2.5"/><circle cx="892.5" cy="491.5" r="6" fill="none" stroke="#9c3539" stroke-width="1"/><circle cx="907.5" cy="491.5" r="6" fill="none" stroke="#9c3539" stroke-width="1"/><line x1="907.5" y1="483" x2="907.5" y2="491" stroke="#9c3539" stroke-width="1"/><polygon points="302.5,304.3 306.7,308.5 302.5,312.7 298.3,308.5" fill="#3f9f3f"/><polygon points="759.5,304.3 763.7,308.5 759.5,312.7 755.3,308.5" fill="#3f9f3f"/><polygon points="789.5,304.3 793.7,308.5 789.5,312.7 785.3,308.5" fill="#3f9f3f"/><polygon points="833.5,304.3 837.7,308.5 833.5,312.7 829.3,308.5" fill="#3f9f3f"/><polygon points="877.5,304.3 881.7,308.5 877.5,312.7 873.3,308.5" fill="#3f9f3f"/><polygon points="966.5,304.3 970.7,308.5 966.5,312.7 962.3,308.5" fill="#3f9f3f"/><polygon points="833.5,540.3 837.7,544.5 833.5,548.7 829.3,544.5" fill="#3f9f3f"/><polygon points="966.5,540.3 970.7,544.5 966.5,548.7 962.3,544.5" fill="#3f9f3f"/><polygon points="966.5,644.3 970.7,648.5 966.5,652.7 962.3,648.5" fill="#3f9f3f"/><g font-family="Liberation Sans"><text transform="matrix(0 -0.13571 0.14493 0 286.90 263.18)" font-size="100" fill="#acacac">+5V</text><text transform="matrix(0.14441 0 0 0.14000 310.78 349.80)" font-size="100" fill="#acacac">C18</text><text transform="matrix(0.13934 0 0 0.14000 311.55 379.60)" font-size="100" fill="#acacac">100nF</text><text transform="matrix(0.13506 0 0 0.13857 286.92 456.00)" font-size="100" fill="#acacac">GND</text><text transform="matrix(0.14048 0 0 0.14203 356.30 376.80)" font-size="100" fill="#acacac">ATMegaAusgänge</text><text transform="matrix(0.12421 0 0 0.10714 448.00 394.50)" font-size="100" fill="#acacac">3</text><text transform="matrix(0.14286 0 0 0.11000 447.79 408.50)" font-size="100" fill="#acacac">2</text><text transform="matrix(0.07816 0 0 0.10580 449.41 423.30)" font-size="100" fill="#acacac">1</text><text transform="matrix(0.13172 0 0 0.13768 449.00 454.50)" font-size="100" fill="#acacac">JP7</text><text transform="matrix(0.14035 0 0 0.14286 536.74 286.00)" font-size="100" fill="#acacac">IC5</text><text transform="matrix(0.14679 0 0 0.15143 537.53 485.20)" font-size="100" fill="#acacac">L298</text><text transform="matrix(0.11739 0 0 0.12571 551.94 312.80)" font-size="100" fill="#acacac">VCC</text><text transform="matrix(0.11886 0 0 0.13043 551.55 342.00)" font-size="100" fill="#acacac">ENABLE_A</text><text transform="matrix(0.12004 0 0 0.13043 551.54 357.00)" font-size="100" fill="#acacac">ENABLE_B</text><text transform="matrix(0.11696 0 0 0.12319 551.45 386.00)" font-size="100" fill="#acacac">INPUT1</text><text transform="matrix(0.12152 0 0 0.12143 551.41 400.80)" font-size="100" fill="#acacac">INPUT2</text><text transform="matrix(0.12117 0 0 0.12286 551.41 415.60)" font-size="100" fill="#acacac">INPUT3</text><text transform="matrix(0.12082 0 0 0.12319 551.41 430.50)" font-size="100" fill="#acacac">INPUT4</text><text transform="matrix(0.11859 0 0 0.12143 552.21 460.00)" font-size="100" fill="#acacac">GND</text><text transform="matrix(0.11328 0 0 0.12571 656.94 312.80)" font-size="100" fill="#acacac">VS</text><text transform="matrix(0.11811 0 0 0.12857 633.22 342.00)" font-size="100" fill="#acacac">SEN_A</text><text transform="matrix(0.12107 0 0 0.12857 632.21 357.00)" font-size="100" fill="#acacac">SEN_B</text><text transform="matrix(0.11417 0 0 0.12857 640.09 387.00)" font-size="100" fill="#acacac">OUT1</text><text transform="matrix(0.11673 0 0 0.12429 640.47 401.20)" font-size="100" fill="#acacac">OUT2</text><text transform="matrix(0.11628 0 0 0.12143 640.48 416.00)" font-size="100" fill="#acacac">OUT3</text><text transform="matrix(0.11583 0 0 0.12143 640.48 431.00)" font-size="100" fill="#acacac">OUT4</text><text transform="matrix(0.11828 0 0 0.12143 529.47 306.00)" font-size="100" fill="#acacac">9</text><text transform="matrix(0.11828 0 0 0.12143 529.41 335.00)" font-size="100" fill="#acacac">6</text><text transform="matrix(0.13115 0 0 0.12319 522.52 350.00)" font-size="100" fill="#acacac">11</text><text transform="matrix(0.11579 0 0 0.12319 529.54 379.00)" font-size="100" fill="#acacac">5</text><text transform="matrix(0.10989 0 0 0.12319 529.95 394.50)" font-size="100" fill="#acacac">7</text><text transform="matrix(0.12000 0 0 0.12143 522.60 408.00)" font-size="100" fill="#acacac">10</text><text transform="matrix(0.12183 0 0 0.12143 522.59 424.00)" font-size="100" fill="#acacac">12</text><text transform="matrix(0.11702 0 0 0.12143 529.47 453.00)" font-size="100" fill="#acacac">8</text><text transform="matrix(0.11287 0 0 0.13043 688.47 305.90)" font-size="100" fill="#acacac">4</text><text transform="matrix(0.08276 0 0 0.13043 689.38 335.90)" font-size="100" fill="#acacac">1</text><text transform="matrix(0.12362 0 0 0.13043 687.77 350.30)" font-size="100" fill="#acacac">15</text><text transform="matrix(0.12527 0 0 0.12857 688.07 379.70)" font-size="100" fill="#acacac">2</text><text transform="matrix(0.12000 0 0 0.12857 688.22 394.70)" font-size="100" fill="#acacac">3</text><text transform="matrix(0.12362 0 0 0.12857 687.77 409.05)" font-size="100" fill="#acacac">13</text><text transform="matrix(0.12239 0 0 0.13043 687.78 423.80)" font-size="100" fill="#acacac">14</text><text transform="matrix(0.13035 0 0 0.12000 715.35 199.20)" font-size="100" fill="#acacac">GND</text><text transform="matrix(0 -0.13778 0.13103 0 775.00 219.39)" font-size="100" fill="#acacac">+12V/+24V</text><text transform="matrix(0.14195 0 0 0.12857 768.19 335.50)" font-size="100" fill="#acacac">C19</text><text transform="matrix(0.14081 0 0 0.13857 768.54 364.70)" font-size="100" fill="#acacac">100nF</text><text transform="matrix(0.13506 0 0 0.14000 745.02 411.80)" font-size="100" fill="#acacac">GND</text><text transform="matrix(0.13459 0 0 0.14000 863.13 411.80)" font-size="100" fill="#acacac">GND</text><text transform="matrix(0.14400 0 0 0.13571 883.28 335.20)" font-size="100" fill="#acacac">C20</text><text transform="matrix(0.14154 0 0 0.13857 884.64 363.90)" font-size="100" fill="#acacac">100uF</text><text transform="matrix(0 -0.14459 0.14286 0 830.00 470.86)" font-size="100" fill="#acacac">D6</text><text transform="matrix(0 -0.12988 0.14286 0 847.50 469.47)" font-size="100" fill="#acacac">1N4001</text><text transform="matrix(0 -0.14461 0.13714 0 962.70 471.16)" font-size="100" fill="#acacac">D13</text><text transform="matrix(0 -0.12751 0.13714 0 979.20 468.46)" font-size="100" fill="#acacac">1N4001</text><text transform="matrix(0 -0.13414 0.14571 0 874.40 522.40)" font-size="100" fill="#acacac">JP2</text><text transform="matrix(0 -0.08506 0.11884 0 889.70 505.84)" font-size="100" fill="#acacac">1</text><text transform="matrix(0 -0.11429 0.11714 0 904.70 505.77)" font-size="100" fill="#acacac">2</text><text transform="matrix(0 -0.14422 0.13517 0 936.30 522.85)" font-size="100" fill="#acacac">Motorsignal</text><text transform="matrix(0 -0.14311 0.15286 0 845.70 603.14)" font-size="100" fill="#acacac">D12</text><text transform="matrix(0 -0.12899 0.14429 0 860.90 600.87)" font-size="100" fill="#acacac">1N4001</text><text transform="matrix(0 -0.13797 0.15507 0 963.50 603.10)" font-size="100" fill="#acacac">D14</text><text transform="matrix(0 -0.12899 0.15143 0 979.20 600.87)" font-size="100" fill="#acacac">1N4001</text><text transform="matrix(0.13129 0 0 0.14000 951.24 692.00)" font-size="100" fill="#acacac">GND</text><text transform="matrix(0.14179 0 0 0.14286 1033.69 483.00)" font-size="100" fill="#acacac">C17</text><text transform="matrix(0.13750 0 0 0.14286 1034.57 512.40)" font-size="100" fill="#acacac">100nF</text><text transform="matrix(0.13435 0 0 0.14286 508.08 632.90)" font-size="100" fill="#acacac">GND</text></g>
</svg>
</body></html>
